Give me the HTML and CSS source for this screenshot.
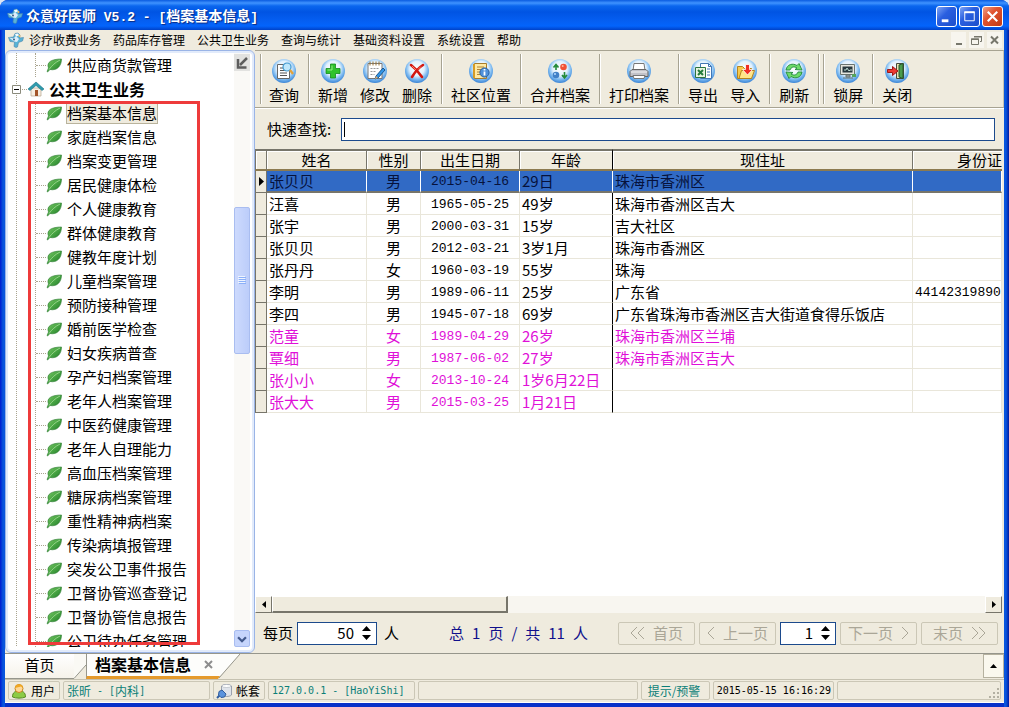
FILE: index.html
```html
<!DOCTYPE html>
<html lang="zh-CN">
<head>
<meta charset="utf-8">
<title>众意好医师 V5.2</title>
<link rel="stylesheet" href="styles.css">
</head>
<body>
<svg class="defs" aria-hidden="true">
  <defs>
    <radialGradient id="orb" cx="50%" cy="40%" r="60%"><stop offset="0" stop-color="#fff"/><stop offset=".5" stop-color="#e2f1fd"/><stop offset=".75" stop-color="#7dbaf0"/><stop offset="1" stop-color="#3a84d6"/></radialGradient>
    <linearGradient id="leafFill" x1="0" y1="0" x2="1" y2="1"><stop offset="0" stop-color="#7cc76a"/><stop offset=".45" stop-color="#4aa844"/><stop offset="1" stop-color="#1d7428"/></linearGradient>
    <symbol id="leaf" viewBox="0 0 16 16"><path d="M1 14.500L2.500 11C0 5 6 2 15.500 2C15.500 9 11 14 4 12.500L1.600 15Z" fill="url(#leafFill)" stroke="#2c7a30" stroke-width=".6"/><path d="M3 12.500C6 8.500 9 5.500 14 3" fill="none" stroke="#a8dc9a" stroke-width=".8"/></symbol>
    <symbol id="logo" viewBox="0 0 16 16"><path d="M5.500 5L7 1.500 10 1l2 2-.5 3 4-.5-1 3.500-4 1.500L9.500 15 8 15.500 6 14.500 6.500 10 2 9.500.5 5.500z" fill="#58b3d6" stroke="#4b83ab" stroke-width=".6"/><path d="M1 5.500l4.500 1L8 4l3 3-2 3-3-.5z" fill="#dceefa"/><path d="M7 2l3-.5 1 2-3 1z" fill="#f4fbff"/><circle cx="6" cy="7.500" r="1" fill="#3c5c84"/><circle cx="11.500" cy="4" r="1" fill="#f0b95a"/></symbol>
  </defs>
</svg>
<div class="window">
  <header class="titlebar">
    <svg class="i16"><use href="#logo"/></svg>
    <h1 class="title">众意好医师<span class="title-mono"> V5.2 - [</span>档案基本信息<span class="title-mono">]</span></h1>
    <div class="win-buttons">
      <button class="win-btn" aria-label="最小化"><svg viewBox="0 0 20 20"><path d="M5 13h7v3H5z" fill="#fff"/></svg></button>
      <button class="win-btn" aria-label="最大化"><svg viewBox="0 0 20 20"><path d="M5 5.500h10v9H5z" fill="none" stroke="#fff"/><path d="M4.500 4.500h11v2h-11z" fill="#fff"/></svg></button>
      <button class="win-btn win-close" aria-label="关闭窗口"><svg viewBox="0 0 20 20"><path d="M5 5l10 10M15 5L5 15" stroke="#fff" stroke-width="2.200"/></svg></button>
    </div>
  </header>
  <div class="client">
    <nav class="menubar">
      <svg class="i16 menu-logo"><use href="#logo"/></svg>
      <button class="menu">诊疗收费业务</button><button class="menu">药品库存管理</button><button class="menu">公共卫生业务</button><button class="menu">查询与统计</button><button class="menu">基础资料设置</button><button class="menu">系统设置</button><button class="menu">帮助</button>
      <div class="mdi">
        <button class="mdi-btn" aria-label="最小化子窗口"><svg viewBox="0 0 15 15"><path d="M5 10h6v2H5z" fill="#77776c"/></svg></button>
        <button class="mdi-btn" aria-label="还原子窗口"><svg viewBox="0 0 15 15"><path d="M5.500 4V3.500h7v5H11M2.500 6h7v5.500h-7z" fill="none" stroke="#77776c"/><path d="M5 3h8v1.500H5zM2 5.500h8V7H2z" fill="#77776c"/></svg></button>
        <button class="mdi-btn" aria-label="关闭子窗口"><svg viewBox="0 0 15 15"><path d="M4 3.500l7 7M11 3.500l-7 7" stroke="#77776c" stroke-width="2"/></svg></button>
      </div>
    </nav>
    <div class="main">
      <aside class="side">
        <div class="tree">
          <ul class="branch">
            <li class="leaf"><svg class="i16"><use href="#leaf"/></svg><span class="label">供应商货款管理</span></li>
          </ul>
          <div class="group">
            <svg class="toggle" viewBox="0 0 9 9"><path d="M.5.5h8v8h-8z" fill="#fff" stroke="#8b8b7c"/><path d="M2 4.500h5" stroke="#000"/></svg>
            <span class="twig"></span>
            <svg class="i16" viewBox="0 0 16 16"><path d="M3 7h10v8H3z" fill="#f7efe2" stroke="#b6a58c" stroke-width=".7"/><path d="M7 9h3v6H7z" fill="#a3552a"/><path d="M0 8L8 1l8 7-2 1.500L8 4.500 2 9.500z" fill="#2e9cae" stroke="#1e7284" stroke-width=".6"/></svg>
            <span class="group-label">公共卫生业务</span>
          </div>
          <ul class="branch">
            <li class="leaf"><svg class="i16"><use href="#leaf"/></svg><span class="label selected">档案基本信息</span></li>
            <li class="leaf"><svg class="i16"><use href="#leaf"/></svg><span class="label">家庭档案信息</span></li>
            <li class="leaf"><svg class="i16"><use href="#leaf"/></svg><span class="label">档案变更管理</span></li>
            <li class="leaf"><svg class="i16"><use href="#leaf"/></svg><span class="label">居民健康体检</span></li>
            <li class="leaf"><svg class="i16"><use href="#leaf"/></svg><span class="label">个人健康教育</span></li>
            <li class="leaf"><svg class="i16"><use href="#leaf"/></svg><span class="label">群体健康教育</span></li>
            <li class="leaf"><svg class="i16"><use href="#leaf"/></svg><span class="label">健教年度计划</span></li>
            <li class="leaf"><svg class="i16"><use href="#leaf"/></svg><span class="label">儿童档案管理</span></li>
            <li class="leaf"><svg class="i16"><use href="#leaf"/></svg><span class="label">预防接种管理</span></li>
            <li class="leaf"><svg class="i16"><use href="#leaf"/></svg><span class="label">婚前医学检查</span></li>
            <li class="leaf"><svg class="i16"><use href="#leaf"/></svg><span class="label">妇女疾病普查</span></li>
            <li class="leaf"><svg class="i16"><use href="#leaf"/></svg><span class="label">孕产妇档案管理</span></li>
            <li class="leaf"><svg class="i16"><use href="#leaf"/></svg><span class="label">老年人档案管理</span></li>
            <li class="leaf"><svg class="i16"><use href="#leaf"/></svg><span class="label">中医药健康管理</span></li>
            <li class="leaf"><svg class="i16"><use href="#leaf"/></svg><span class="label">老年人自理能力</span></li>
            <li class="leaf"><svg class="i16"><use href="#leaf"/></svg><span class="label">高血压档案管理</span></li>
            <li class="leaf"><svg class="i16"><use href="#leaf"/></svg><span class="label">糖尿病档案管理</span></li>
            <li class="leaf"><svg class="i16"><use href="#leaf"/></svg><span class="label">重性精神病档案</span></li>
            <li class="leaf"><svg class="i16"><use href="#leaf"/></svg><span class="label">传染病填报管理</span></li>
            <li class="leaf"><svg class="i16"><use href="#leaf"/></svg><span class="label">突发公卫事件报告</span></li>
            <li class="leaf"><svg class="i16"><use href="#leaf"/></svg><span class="label">卫督协管巡查登记</span></li>
            <li class="leaf"><svg class="i16"><use href="#leaf"/></svg><span class="label">卫督协管信息报告</span></li>
            <li class="leaf"><svg class="i16"><use href="#leaf"/></svg><span class="label">公卫待办任务管理</span></li>
          </ul>
        </div>
        <div class="vscroll">
          <button class="pin" aria-label="收起"><svg viewBox="0 0 16 16"><path d="M13 3L6 10" stroke="#5d5d5d" stroke-width="2.500"/><path d="M4 4v8.500h8.500" fill="none" stroke="#5d5d5d" stroke-width="2.500"/></svg></button>
          <div class="vgap-top"></div>
          <div class="vthumb"><svg viewBox="0 0 8 9"><path d="M0 .5h7M0 2.500h7M0 4.500h7M0 6.500h7" stroke="#eef4ff"/><path d="M1 1.500h7M1 3.500h7M1 5.500h7M1 7.500h7" stroke="#8cb0f8"/></svg></div>
          <div class="vgap-bottom"></div>
          <button class="vdown" aria-label="向下滚动"><svg viewBox="0 0 16 16"><path d="M3.500 6L8 10.500 12.500 6" fill="none" stroke="#42598c" stroke-width="2.600"/></svg></button>
        </div>
        <div class="frame"></div>
      </aside>
      <section class="content">
        <div class="toolbar">
          <span class="grip"></span>
          <button class="tool"><svg viewBox="0 0 26 26"><circle cx="13" cy="13" r="12" fill="url(#orb)"/><path d="M6.500 6.500h12v14h-12z" fill="#fff" stroke="#666"/><path d="M9 10h5M9 12.500h6M9 15h7M9 17.500h7" stroke="#555"/><circle cx="16" cy="9" r="4" fill="#bfe7fb" stroke="#3f97cf" stroke-width="1.200"/><path d="M19 12l3 4" stroke="#e2a23b" stroke-width="2.400"/></svg>查询</button>
          <span class="sep"></span>
          <button class="tool"><svg viewBox="0 0 26 26"><circle cx="13" cy="13" r="12" fill="url(#orb)"/><path d="M10.500 6h5v4.500H20v5h-4.500V20h-5v-4.500H6v-5h4.500z" fill="#2fc32c" stroke="#118a1c" stroke-width=".8"/><path d="M12 7.500V12H7.500" fill="none" stroke="#93ee83"/></svg>新增</button>
          <button class="tool"><svg viewBox="0 0 26 26"><circle cx="13" cy="13" r="12" fill="url(#orb)"/><path d="M6 5.500h14v15H6z" fill="#fff" stroke="#777"/><path d="M8 3.500v4M11 3.500v4M14 3.500v4M17 3.500v4" stroke="#9b7532"/><path d="M8.500 10.500h8M8.500 13.500h6M8.500 16.500h4" stroke="#999" stroke-dasharray="2 1"/><path d="M21 10l2 2-7 8-3 1 1-3z" fill="#3196e8" stroke="#17558f"/><path d="M13 21l1-3 2 2z" fill="#e8b06b"/></svg>修改</button>
          <button class="tool"><svg viewBox="0 0 26 26"><circle cx="13" cy="13" r="12" fill="url(#orb)"/><path d="M7 7c4 3 7 6 11 12M19 7c-5 3-8 7-11 12" fill="none" stroke="#d3170f" stroke-width="2.600" stroke-linecap="round"/><path d="M8 8l4 4M17 8.500l-3 3" stroke="#ff786a"/></svg>删除</button>
          <span class="sep"></span>
          <button class="tool"><svg viewBox="0 0 26 26"><circle cx="13" cy="13" r="12" fill="url(#orb)"/><path d="M6.500 5.500h12v15h-12z" fill="#ffe9a2" stroke="#a87c2c"/><path d="M9 9h7M9 11.500h4M9 14h3M9 16.500h3" stroke="#b08438"/><path d="M6 6v14" stroke="#d69b25" stroke-width="2"/><circle cx="16.500" cy="14.500" r="4.600" fill="#4f91da" stroke="#245c9e"/><path d="M16.500 11v1.500M16.500 13.500v4" stroke="#fff" stroke-width="1.800"/></svg>社区位置</button>
          <span class="sep"></span>
          <button class="tool"><svg viewBox="0 0 26 26"><circle cx="13" cy="13" r="12" fill="url(#orb)"/><circle cx="16.500" cy="9" r="3.300" fill="#f05236"/><circle cx="9" cy="17" r="3.300" fill="#4180c7"/><circle cx="15.700" cy="8" r="1" fill="#ffb6a2"/><circle cx="8" cy="16" r="1" fill="#b5dbff"/><path d="M9 12V8.500h2.500M6.500 9.500L9 6.500l2.500 3M17.500 14v4H15M15 17l2.500 3 2.500-3" fill="none" stroke="#248b3a" stroke-width="1.600"/></svg>合并档案</button>
          <span class="sep"></span>
          <button class="tool"><svg viewBox="0 0 26 26"><circle cx="13" cy="13" r="12" fill="url(#orb)"/><path d="M8 5.500h10l1 7H7z" fill="#fff" stroke="#777"/><path d="M6 11.500h14l2 2v5H4v-5z" fill="#c2c2c8" stroke="#666"/><path d="M5 14h16" stroke="#f4f4f4"/><path d="M7 17.500h12l-1 3H8z" fill="#fff" stroke="#777"/></svg>打印档案</button>
          <span class="sep"></span>
          <button class="tool"><svg viewBox="0 0 26 26"><circle cx="13" cy="13" r="12" fill="url(#orb)"/><path d="M10.500 5.500h8l3 3v12h-11z" fill="#fff" stroke="#4277b4"/><path d="M18.500 5.500v3h3M17 11h3M17 14h3M17 17h3" fill="none" stroke="#4277b4"/><path d="M5.500 9.500h10v10h-10z" fill="#e8f4df" stroke="#2c7440"/><path d="M8 12l5 5M13 12l-5 5" stroke="#237b3b" stroke-width="2"/></svg>导出</button>
          <button class="tool"><svg viewBox="0 0 26 26"><circle cx="13" cy="13" r="12" fill="url(#orb)"/><path d="M5.500 8.500h5l2 2h7v10h-14z" fill="#f8ca4b" stroke="#b5831d"/><path d="M7 20.500l2.500-8h13l-3 8z" fill="#ffe587" stroke="#b5831d"/><path d="M13.500 6.500h4v5h3L15.500 17l-5-5.500h3z" fill="#ef2e25" stroke="#fff" stroke-width=".8"/></svg>导入</button>
          <span class="sep"></span>
          <button class="tool"><svg viewBox="0 0 26 26"><circle cx="13" cy="13" r="12" fill="url(#orb)"/><path d="M5 12c1-6 7-7 11-4.500L18 5.500l3 6.500-7-.5 2-1.500c-3-2-6-1-7 2z" fill="#6ddb69" stroke="#21883a" stroke-width=".9"/><path d="M21 14c-1 6-7 7-11 4.500L8 20.500 5 14l7 .5-2 1.500c3 2 6 1 7-2z" fill="#6ddb69" stroke="#21883a" stroke-width=".9"/></svg>刷新</button>
          <span class="sep sep-end"></span>
          <span class="sep"></span>
          <button class="tool"><svg viewBox="0 0 26 26"><circle cx="13" cy="13" r="12" fill="url(#orb)"/><path d="M5.500 6.500h14v10h-14z" fill="#e6e6de" stroke="#69736f"/><path d="M7.500 8.500h10v6h-10z" fill="#29383e"/><path d="M9 12h2l1-2 2 3 1-1h2" fill="none" stroke="#bbd9cf"/><path d="M11 17h4v2h-4zM8 20h10" fill="#aaa" stroke="#63716e"/><path d="M17 16h4v3h-4z" fill="#54a45d"/></svg>锁屏</button>
          <span class="sep"></span>
          <button class="tool"><svg viewBox="0 0 26 26"><circle cx="13" cy="13" r="12" fill="url(#orb)"/><path d="M12.500 5.500h7v15h-7z" fill="#e9e3b2" stroke="#474b3a"/><path d="M15 7l4-1.500v15L15 19z" fill="#4a9b4d" stroke="#24572d"/><path d="M3.500 11.500h5v-3L14 13l-5.500 4.500v-3h-5z" fill="#ec3931" stroke="#9f1717"/></svg>关闭</button>
        </div>
        <div class="search">
          <label for="quick">快速查找:</label>
          <div class="search-box"><span class="caret"></span><input id="quick" type="text"></div>
        </div>
        <div class="grid">
          <table class="records">
            <colgroup><col class="c-mark"><col class="c-name"><col class="c-sex"><col class="c-date"><col class="c-age"><col class="c-addr"><col></colgroup>
            <thead><tr><th class="corner"></th><th>姓名</th><th>性别</th><th>出生日期</th><th class="fixed">年龄</th><th>现住址</th><th class="idcard">身份证</th></tr></thead>
            <tbody>
              <tr class="current"><td class="mark"><svg viewBox="0 0 5 9"><path d="M0 0l5 4.500L0 9z"/></svg></td><td>张贝贝</td><td class="sex">男</td><td class="num">2015-04-16</td><td class="fixed">29日</td><td>珠海市香洲区</td><td></td></tr>
              <tr><td class="mark"></td><td>汪喜</td><td class="sex">男</td><td class="num">1965-05-25</td><td class="fixed">49岁</td><td>珠海市香洲区吉大</td><td></td></tr>
              <tr><td class="mark"></td><td>张宇</td><td class="sex">男</td><td class="num">2000-03-31</td><td class="fixed">15岁</td><td>吉大社区</td><td></td></tr>
              <tr><td class="mark"></td><td>张贝贝</td><td class="sex">男</td><td class="num">2012-03-21</td><td class="fixed">3岁1月</td><td>珠海市香洲区</td><td></td></tr>
              <tr><td class="mark"></td><td>张丹丹</td><td class="sex">女</td><td class="num">1960-03-19</td><td class="fixed">55岁</td><td>珠海</td><td></td></tr>
              <tr><td class="mark"></td><td>李明</td><td class="sex">男</td><td class="num">1989-06-11</td><td class="fixed">25岁</td><td>广东省</td><td class="idnum">44142319890</td></tr>
              <tr><td class="mark"></td><td>李四</td><td class="sex">男</td><td class="num">1945-07-18</td><td class="fixed">69岁</td><td>广东省珠海市香洲区吉大街道食得乐饭店</td><td></td></tr>
              <tr class="flag"><td class="mark"></td><td>范童</td><td class="sex">女</td><td class="num">1989-04-29</td><td class="fixed">26岁</td><td>珠海市香洲区兰埔</td><td></td></tr>
              <tr class="flag"><td class="mark"></td><td>覃细</td><td class="sex">男</td><td class="num">1987-06-02</td><td class="fixed">27岁</td><td>珠海市香洲区吉大</td><td></td></tr>
              <tr class="flag"><td class="mark"></td><td>张小小</td><td class="sex">女</td><td class="num">2013-10-24</td><td class="fixed">1岁6月22日</td><td></td><td></td></tr>
              <tr class="flag"><td class="mark"></td><td>张大大</td><td class="sex">男</td><td class="num">2015-03-25</td><td class="fixed">1月21日</td><td></td><td></td></tr>
            </tbody>
          </table>
        </div>
        <div class="hscroll">
          <button class="hbtn" aria-label="向左滚动"><svg viewBox="0 0 4 7"><path d="M4 0v7L0 3.500z"/></svg></button>
          <div class="hthumb"></div>
          <div class="htrack"></div>
          <button class="hbtn" aria-label="向右滚动"><svg viewBox="0 0 4 7"><path d="M0 0v7l4-3.500z"/></svg></button>
        </div>
        <div class="pager">
          <label for="size">每页</label>
          <div class="spin spin-wide"><input id="size" type="text" value="50"><svg viewBox="0 0 9 14"><path d="M4.500 0L9 5H0zM0 9h9l-4.500 5z"/></svg></div>
          <span>人</span>
          <div class="total"><span>总</span><span>1</span><span>页</span><span>/</span><span>共</span><span>11</span><span>人</span></div>
          <div class="nav">
            <button class="nav-btn" disabled><svg class="dbl" viewBox="0 0 15 12"><path d="M7 0L1 6l6 6M14 0L8 6l6 6"/></svg>首页</button>
            <button class="nav-btn" disabled><svg class="sgl" viewBox="0 0 8 12"><path d="M7 0L1 6l6 6"/></svg>上一页</button>
            <div class="spin"><input type="text" value="1" aria-label="页码"><svg viewBox="0 0 9 14"><path d="M4.500 0L9 5H0zM0 9h9l-4.500 5z"/></svg></div>
            <button class="nav-btn" disabled>下一页<svg class="sgl" viewBox="0 0 8 12"><path d="M1 0l6 6-6 6"/></svg></button>
            <button class="nav-btn" disabled>末页<svg class="dbl" viewBox="0 0 15 12"><path d="M1 0l6 6-6 6M8 0l6 6-6 6"/></svg></button>
          </div>
        </div>
      </section>
    </div>
    <div class="tabs">
      <button class="tab">首页</button>
      <svg class="slant" viewBox="0 0 12 25" preserveAspectRatio="none"><path d="M0 0h12v11L0 25z" fill="#faf9f4"/><path d="M12 11L0 24.500" stroke="#96968c"/></svg>
      <button class="tab active">档案基本信息<svg class="tab-x" viewBox="0 0 9 9"><path d="M1 1l7 7M8 1L1 8" stroke="#8d8d8d" stroke-width="2"/></svg></button>
      <svg class="slant-active" viewBox="0 0 22 25" preserveAspectRatio="none"><path d="M0 0h22L2 22l-2 3z" fill="#fdfdfb"/><path d="M0 22h2l-2 3z" fill="#e59a2c"/><path d="M22 0L1 24" stroke="#96968c"/></svg>
      <button class="tab-menu" aria-label="窗口列表"><svg viewBox="0 0 7 4"><path d="M3.500 0L7 4H0z"/></svg></button>
    </div>
    <footer class="status">
      <div class="cell w-label"><svg class="i16" viewBox="0 0 16 16"><path d="M1.500 14c0-5 3-6 6.500-6s6.500 1 6.500 6c-3 1.500-10 1.500-13 0z" fill="#8ccb45" stroke="#578b24"/><circle cx="8" cy="5.500" r="4" fill="#ffd895" stroke="#c9841b"/><path d="M4 5C4 0 12 0 12 5L10 3.500z" fill="#f0a824"/></svg>用户</div>
      <div class="cell teal w-value">张昕<span class="mono"> - [</span>内科<span class="mono">]</span></div>
      <div class="cell w-label"><svg class="i16" viewBox="0 0 16 16"><path d="M5.500 3v9c2 2 8 2 10 0V3c-2-2-8-2-10 0z" fill="#dfe3ea" stroke="#8a919e" stroke-width=".8"/><ellipse cx="10.500" cy="3" rx="4.500" ry="1.500" fill="#fff" stroke="#a5abb5" stroke-width=".6"/><path d="M1 15l3-3" stroke="#315d9e" stroke-width="2"/><path d="M3 8.500L6 7l4 4-1.500 3-3.500.5L2.500 12z" fill="#5b93dd" stroke="#315d9e"/></svg>帐套</div>
      <div class="cell teal w-value"><span class="mono">127.0.0.1 - [HaoYiShi]</span></div>
      <div class="cell grow4"></div>
      <div class="cell teal w-alert">提示/预警</div>
      <div class="cell w-time"><span class="mono">2015-05-15 16:16:29</span></div>
      <div class="cell grow3"><svg class="resize" viewBox="0 0 11 11"><path d="M8 0h2v2H8zM4 4h2v2H4zM8 4h2v2H8zM0 8h2v2H0zM4 8h2v2H4zM8 8h2v2H8z" fill="#b3b0a2"/></svg></div>
    </footer>
  </div>
</div>
</body>
</html>
```

FILE: styles.css
```css
* { box-sizing: border-box; }
body {
  margin: 0;
  background: #dce6f4;
  color: #000;
  font: 15px/20px "Noto Sans CJK SC", sans-serif;
}
button, input { font: inherit; color: inherit; margin: 0; padding: 0; border: 0; background: none; }
ul { margin: 0; padding: 0; list-style: none; }
svg { display: block; flex: none; }
.defs { position: absolute; width: 0; height: 0; }
.i16 { width: 16px; height: 16px; }

.window {
  display: flex;
  flex-direction: column;
  height: 100vh;
  padding: 0 5px 4px;
  border-radius: 8px 8px 0 0;
  background: linear-gradient(90deg, #0019cf 0, #0855dd 3px, #0855dd 5px, transparent 5px, transparent calc(100% - 5px), #0855dd calc(100% - 5px), #0855dd calc(100% - 3px), #001aa0 100%), #0831c9;
}
.titlebar {
  display: flex;
  align-items: center;
  flex: none;
  height: 30px;
  margin: 0 -5px;
  padding: 2px 6px 0 7px;
  gap: 3px;
  border-radius: 8px 8px 0 0;
  background: linear-gradient(#0a5be0 0, #3f93ff 3px, #0a66ee 6px, #0054e3 12px, #0560f4 22px, #0364fc 26px, #0042c8 30px);
}
.title { margin: 0; color: #fff; font-size: 14px; font-weight: 700; line-height: 20px; white-space: pre; text-shadow: 1px 1px 1px #0a2a80; }
.title-mono { font-family: "Liberation Mono", monospace; font-size: 13px; }
.win-buttons { display: flex; gap: 2px; margin-left: auto; }
.win-btn { width: 21px; height: 21px; border: 1px solid #fff; border-radius: 3px; background: linear-gradient(135deg, #7fa5f5, #2a5fe0 40%, #1c4ecb); }
.win-close { background: linear-gradient(135deg, #f0a088, #e0532f 40%, #c23a14); }

.client { display: flex; flex-direction: column; flex: 1; min-height: 0; background: #efebde; }
.menubar { display: flex; align-items: center; flex: none; height: 20px; padding: 0 2px 0 3px; gap: 12px; font-size: 12px; line-height: 18px; }
.menu-logo { margin-right: -7px; }
.mdi { display: flex; gap: 3px; margin-left: auto; }
.mdi-btn { width: 15px; height: 16px; background: #f7f5ee; }

.main { display: flex; flex: 1; min-height: 0; }
.side { position: relative; display: flex; flex: none; width: 250px; padding: 2px 4px 5px 3px; border: 1px solid #9ab4e6; border-radius: 6px; background: #fff; box-shadow: inset 0 0 0 2px #e2ebfb; }
.tree { flex: 1; overflow: hidden; padding-left: 7px; background: repeating-linear-gradient(#a9a48f 0 1px, transparent 1px 2px) 7px 0 / 1px 100% no-repeat; }
.branch { margin-left: 19px; border-left: 1px dotted #a9a48f; }
.leaf { display: flex; align-items: center; height: 24px; gap: 4px; }
.leaf::before { content: ""; width: 10px; margin-right: -4px; border-top: 1px dotted #a9a48f; }
.label { height: 21px; padding: 0 1px; line-height: 20px; white-space: nowrap; }
.selected { background: #efebde; outline: 1px solid #b9b39c; outline-offset: -1px; }
.group { display: flex; align-items: center; height: 24px; margin-left: -4px; gap: 1px; }
.toggle { width: 9px; height: 9px; }
.twig { width: 5px; border-top: 1px dotted #a9a48f; }
.group-label { margin-left: 4px; font-size: 16px; font-weight: 700; }
.frame { position: absolute; top: 50px; left: 22px; width: 172px; bottom: 7px; border: 3px solid #ee3b3b; }
.vscroll { display: flex; flex-direction: column; flex: none; width: 16px; padding-top: 1px; background: #faf9f6; }
.pin { width: 16px; height: 17px; background: #e2e2e0; }
.vgap-top { flex: 137; }
.vthumb { display: flex; align-items: center; justify-content: center; flex: 147; border: 1px solid #a9bdf0; border-radius: 2px; background: linear-gradient(90deg, #cddafd, #bccdfa); }
.vthumb svg { width: 8px; height: 9px; }
.vgap-bottom { flex: 278; }
.vdown { width: 16px; height: 17px; border: 1px solid #a9bdf0; border-radius: 2px; background: #c6d5fc; }

.content { display: flex; flex-direction: column; flex: 1; min-width: 0; }
.toolbar { display: flex; align-items: center; flex: none; height: 58px; padding: 0 0 0 5px; border-top: 1px solid #a7a392; border-bottom: 1px solid #a7a392; border-right: 1px solid #c5c1b0; }
.grip, .sep { width: 2px; height: 50px; border-left: 1px solid #a7a392; border-right: 1px solid #fff; }
.grip { margin-right: 1px; }
.sep { margin: 0 2px 0 3px; }
.sep-end { margin-right: 0; }
.tool { display: flex; flex-direction: column; align-items: center; padding: 5px 6px 0; line-height: 22px; white-space: nowrap; }
.tool svg { width: 26px; height: 26px; }

.search { display: flex; align-items: center; flex: none; height: 41px; padding: 0 9px 0 12px; gap: 10px; border-top: 1px solid #fff; }
.search-box { display: flex; align-items: center; flex: 1; height: 23px; padding: 0 2px; border: 1px solid #1c4a8c; background: #fff; }
.search-box input { flex: 1; min-width: 0; outline: 0; }
.caret { width: 1px; height: 15px; background: #000; }

.grid { flex: 1; min-height: 0; overflow: hidden; margin-right: 2px; background: #fff; }
.records { width: 100%; table-layout: fixed; border-collapse: separate; border-spacing: 0; }
.c-mark { width: 12px; }
.c-name { width: 100px; }
.c-sex { width: 54px; }
.c-date { width: 99px; }
.c-age { width: 93px; }
.c-addr { width: 300px; }
.records th, .records td { height: 22px; padding: 0 2px; line-height: 20px; white-space: nowrap; overflow: hidden; }
.records th { font-weight: 400; background: #efebde; border-top: 2px solid #77756a; border-right: 1px solid #77756a; border-bottom: 2px solid #8c7a50; box-shadow: inset 1px 1px 0 #fff; line-height: 18px; }
.records td { border-right: 1px solid #e9e6da; border-bottom: 1px solid #e9e6da; }
.records .corner { border-left: 1px solid #77756a; }
.records .idcard { padding-left: 44px; border-right: 0; text-align: left; }
.records .mark { padding: 0 3px; background: #efebde; border-right: 1px solid #77756a; border-bottom: 1px solid #77756a; border-left: 1px solid #77756a; }
.mark svg { width: 5px; height: 9px; }
.records .fixed { border-right: 1px solid #000; }
.records .sex { text-align: center; }
.records .num { padding-top: 2px; line-height: 18px; font-family: "Liberation Mono", monospace; font-size: 13px; text-align: center; }
.records .idnum { padding-top: 2px; line-height: 18px; font-family: "Liberation Mono", monospace; font-size: 13px; }
.current td:not(.mark) { background: #316ac5; color: #06123c; border-right-color: #fff; border-bottom: 2px solid #77756a; line-height: 18px; }
.flag td { color: #e010d8; }

.hscroll { display: flex; flex: none; height: 17px; margin-right: 2px; }
.hbtn { display: flex; align-items: center; justify-content: center; width: 17px; background: #efebde; border: 1px solid; border-color: #fff #77756a #77756a #fff; }
.hbtn svg { width: 4px; height: 7px; }
.hthumb { flex: 235; background: #efebde; border: 1px solid; border-color: #fff #77756a #77756a #fff; border-right-width: 2px; border-bottom-width: 2px; }
.htrack { flex: 480; background: #f8f6f0; }

.pager { display: flex; align-items: center; flex: none; height: 40px; padding: 0 6px 0 8px; gap: 4px; }
.spin { display: flex; align-items: center; width: 56px; height: 23px; padding: 0 5px 0 2px; gap: 8px; border: 1px solid #1c4a8c; background: #fff; }
.spin-wide { width: 80px; margin-right: 3px; }
.spin input { flex: 1; min-width: 0; width: 0; text-align: right; }
.spin svg { width: 9px; height: 14px; }
.total { display: flex; gap: 8px; margin-left: 46px; color: #10108c; }
.nav { display: flex; gap: 4px; margin-left: auto; }
.nav-btn { display: flex; align-items: center; justify-content: center; width: 77px; height: 23px; gap: 8px; border: 1px solid #cbc7b6; border-radius: 2px; color: #aaa697; }
.nav-btn svg { fill: none; stroke: #aaa697; height: 12px; }
.dbl { width: 15px; }
.sgl { width: 8px; }

.tabs { display: flex; align-items: flex-start; flex: none; height: 27px; border-top: 1px solid #96968c; border-bottom: 1px solid #c5c1b0; }
.tab { width: 69px; height: 25px; line-height: 20px; padding-bottom: 3px; border-bottom: 1px solid #96968c; background: linear-gradient(#fff, #f6f3ea); }
.active { display: flex; align-items: center; justify-content: space-between; width: 132px; padding: 0 5px 2px 8px; border-left: 1px solid #96968c; border-bottom: 3px solid #e59a2c; background: #fdfdfb; font-size: 16px; font-weight: 700; white-space: nowrap; }
.tab-x { width: 9px; height: 9px; }
.slant { width: 12px; height: 25px; }
.slant-active { width: 22px; height: 25px; }
.tab-menu { display: flex; align-items: center; justify-content: center; width: 21px; height: 24px; margin-left: auto; border: 1px solid #b5b19f; background: #faf8ee; }
.tab-menu svg { width: 7px; height: 4px; }

.status { display: flex; flex: none; height: 23px; padding: 1px 3px 2px; gap: 3px; border-bottom: 1px solid #fff; font-size: 12px; line-height: 18px; }
.cell { display: flex; align-items: center; height: 19px; padding: 0 3px; border: 1px solid #cbc7b6; border-radius: 2px; white-space: pre; }
.cell.w-label { width: 52px; padding: 0 2px; gap: 4px; }
.w-value { width: 147px; }
.w-alert { width: 69px; padding: 0 6px; }
.w-time { width: 121px; }
.grow4 { flex: 219; }
.grow3 { flex: 168; justify-content: flex-end; align-items: flex-end; padding: 0; }
.resize { width: 11px; height: 11px; }
.teal { color: #0b7f78; }
.mono { font-family: "DejaVu Sans Mono", monospace; font-size: 10px; }
```
